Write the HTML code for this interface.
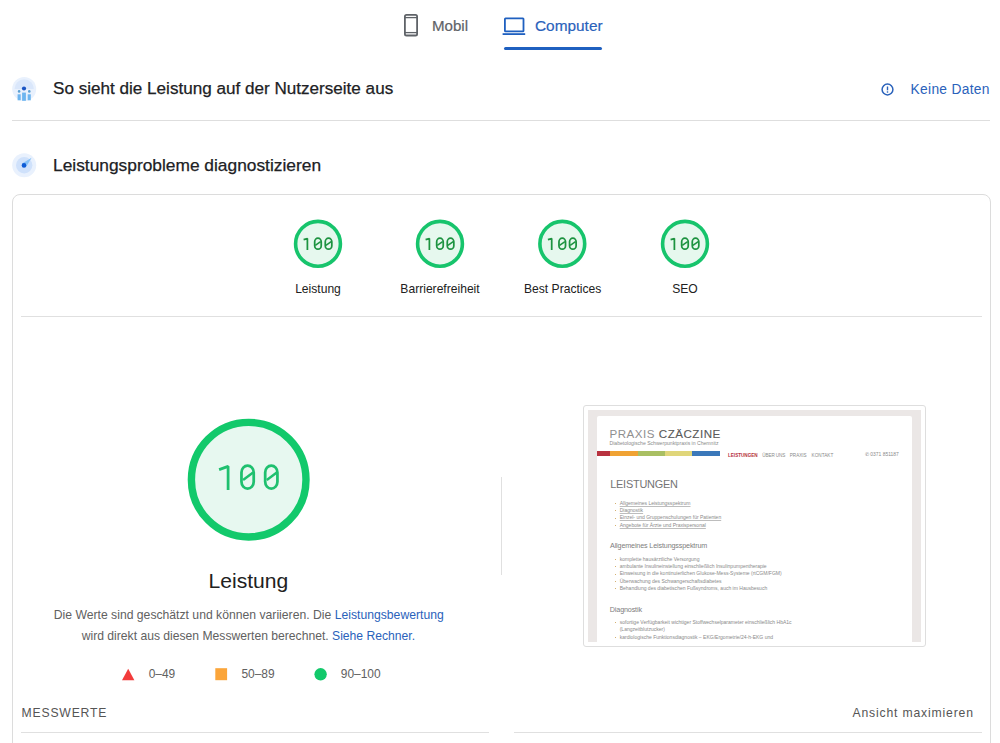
<!DOCTYPE html>
<html><head><meta charset="utf-8">
<style>
html,body{margin:0;padding:0;background:#fff;}
body{width:1000px;height:743px;overflow:hidden;position:relative;font-family:"Liberation Sans",sans-serif;}
.a{position:absolute;white-space:nowrap;}
.t{line-height:1;}
</style></head><body>
<svg class="a" style="left:0;top:0" width="1000" height="60" viewBox="0 0 1000 60">
  <rect x="404.9" y="14.9" width="12.2" height="20.6" rx="1.6" fill="none" stroke="#5f6368" stroke-width="1.8"/>
  <line x1="405" y1="17.6" x2="417" y2="17.6" stroke="#5f6368" stroke-width="1.3"/>
  <line x1="405" y1="32.6" x2="417" y2="32.6" stroke="#5f6368" stroke-width="1.3"/>
  <rect x="504.9" y="18.3" width="18.6" height="13" rx="0.6" fill="none" stroke="#1f60c0" stroke-width="1.8"/>
  <rect x="502.6" y="33.2" width="22.6" height="1.8" fill="#1f60c0"/>
  <rect x="504" y="47" width="98" height="3" rx="1.5" fill="#1f60c0"/>
</svg>
<div class="a t" style="left:432.00px;top:18.22px;font-size:15.1px;color:#5f6368;-webkit-text-stroke:0.22px #5f6368;">Mobil</div>
<div class="a t" style="left:535.00px;top:17.76px;font-size:15.4px;color:#2a62bb;-webkit-text-stroke:0.18px #2a62bb;">Computer</div>
<svg class="a" style="left:0;top:60px" width="60" height="130" viewBox="0 60 60 130">
  <circle cx="24.2" cy="89" r="12" fill="#e9f1fd"/>
  <path d="M14.5 89 A9.7 9.7 0 0 1 33.9 89 Z" fill="#dae7fb"/>
  <circle cx="24" cy="88.5" r="2.1" fill="#1b55c4"/>
  <circle cx="19.1" cy="91.4" r="1.3" fill="#5b9fd2"/>
  <circle cx="29.3" cy="91.4" r="1.3" fill="#5b9fd2"/>
  <rect x="17.6" y="94.3" width="3.1" height="6" fill="#6db5ef"/>
  <rect x="22.1" y="92.6" width="3.8" height="8.2" fill="#6db5ef"/>
  <rect x="27.7" y="94.3" width="3.1" height="6" fill="#6db5ef"/>
  <circle cx="24.2" cy="165.2" r="12" fill="#e9f1fd"/>
  <circle cx="24.2" cy="165.2" r="8.2" fill="#cfe1fb"/>
  <path d="M31.6 157.7 L22.1 163.5 L25.9 167.3 Z" fill="#86c1f6"/>
  <circle cx="24" cy="165.4" r="2.3" fill="#0d5bd6"/>
</svg>
<div class="a t" style="left:53.00px;top:79.92px;font-size:17.1px;color:#202124;-webkit-text-stroke:0.25px #202124;">So sieht die Leistung auf der Nutzerseite aus</div>
<div class="a t" style="left:53.00px;top:156.81px;font-size:17.35px;color:#202124;-webkit-text-stroke:0.25px #202124;">Leistungsprobleme diagnostizieren</div>
<svg class="a" style="left:878px;top:80px" width="20" height="20" viewBox="878 79.5 20 20">
  <circle cx="887.5" cy="89" r="5.4" fill="none" stroke="#2a62bb" stroke-width="1.5"/>
  <rect x="886.8" y="86" width="1.4" height="3.8" fill="#2a62bb"/>
  <rect x="886.8" y="90.8" width="1.4" height="1.4" fill="#2a62bb"/>
</svg>
<div class="a t" style="left:910.60px;top:83.32px;font-size:13.8px;color:#2a62bb;letter-spacing:0.29px;">Keine Daten</div>
<div class="a" style="left:12px;top:120px;width:978px;height:1px;background:#dedede;"></div>
<div class="a" style="left:12px;top:194px;width:977px;height:700px;border:1px solid #dcdcdc;border-radius:8px;"></div>
<svg class="a" style="left:0;top:0" width="1000" height="743" viewBox="0 0 1000 743">
<circle cx="318" cy="243.8" r="22.4" fill="#e6f8ee" stroke="#17c46c" stroke-width="3.6"/>
<path d="M303.60 239.70 L307.40 238.61 L307.40 250.10" fill="none" stroke="#1d9340" stroke-width="1.75" stroke-linejoin="bevel"/>
<rect x="314.68" y="238.18" width="6.55" height="11.05" rx="3.28" ry="3.60" fill="none" stroke="#1d9340" stroke-width="1.75"/>
<line x1="315.30" y1="245.30" x2="320.60" y2="241.70" stroke="#1d9340" stroke-width="1.57"/>
<rect x="325.27" y="238.18" width="6.55" height="11.05" rx="3.28" ry="3.60" fill="none" stroke="#1d9340" stroke-width="1.75"/>
<line x1="325.90" y1="245.30" x2="331.20" y2="241.70" stroke="#1d9340" stroke-width="1.57"/>
<circle cx="440" cy="243.8" r="22.4" fill="#e6f8ee" stroke="#17c46c" stroke-width="3.6"/>
<path d="M425.60 239.70 L429.40 238.61 L429.40 250.10" fill="none" stroke="#1d9340" stroke-width="1.75" stroke-linejoin="bevel"/>
<rect x="436.68" y="238.18" width="6.55" height="11.05" rx="3.28" ry="3.60" fill="none" stroke="#1d9340" stroke-width="1.75"/>
<line x1="437.30" y1="245.30" x2="442.60" y2="241.70" stroke="#1d9340" stroke-width="1.57"/>
<rect x="447.27" y="238.18" width="6.55" height="11.05" rx="3.28" ry="3.60" fill="none" stroke="#1d9340" stroke-width="1.75"/>
<line x1="447.90" y1="245.30" x2="453.20" y2="241.70" stroke="#1d9340" stroke-width="1.57"/>
<circle cx="562.3" cy="243.8" r="22.4" fill="#e6f8ee" stroke="#17c46c" stroke-width="3.6"/>
<path d="M547.90 239.70 L551.70 238.61 L551.70 250.10" fill="none" stroke="#1d9340" stroke-width="1.75" stroke-linejoin="bevel"/>
<rect x="558.97" y="238.18" width="6.55" height="11.05" rx="3.28" ry="3.60" fill="none" stroke="#1d9340" stroke-width="1.75"/>
<line x1="559.60" y1="245.30" x2="564.90" y2="241.70" stroke="#1d9340" stroke-width="1.57"/>
<rect x="569.57" y="238.18" width="6.55" height="11.05" rx="3.28" ry="3.60" fill="none" stroke="#1d9340" stroke-width="1.75"/>
<line x1="570.20" y1="245.30" x2="575.50" y2="241.70" stroke="#1d9340" stroke-width="1.57"/>
<circle cx="685" cy="243.8" r="22.4" fill="#e6f8ee" stroke="#17c46c" stroke-width="3.6"/>
<path d="M670.60 239.70 L674.40 238.61 L674.40 250.10" fill="none" stroke="#1d9340" stroke-width="1.75" stroke-linejoin="bevel"/>
<rect x="681.67" y="238.18" width="6.55" height="11.05" rx="3.28" ry="3.60" fill="none" stroke="#1d9340" stroke-width="1.75"/>
<line x1="682.30" y1="245.30" x2="687.60" y2="241.70" stroke="#1d9340" stroke-width="1.57"/>
<rect x="692.27" y="238.18" width="6.55" height="11.05" rx="3.28" ry="3.60" fill="none" stroke="#1d9340" stroke-width="1.75"/>
<line x1="692.90" y1="245.30" x2="698.20" y2="241.70" stroke="#1d9340" stroke-width="1.57"/>
<circle cx="248.7" cy="479.7" r="57.3" fill="#e7f8f0" stroke="#12c96b" stroke-width="7.4"/>
<path d="M219.10 469.60 L228.10 466.36 L228.10 489.90" fill="none" stroke="#1fc06f" stroke-width="2.75" stroke-linejoin="bevel"/>
<rect x="241.47" y="465.68" width="12.25" height="22.85" rx="6.12" ry="6.74" fill="none" stroke="#1fc06f" stroke-width="2.75"/>
<line x1="243.10" y1="479.90" x2="253.10" y2="472.50" stroke="#1fc06f" stroke-width="2.48"/>
<rect x="265.18" y="465.68" width="12.25" height="22.85" rx="6.12" ry="6.74" fill="none" stroke="#1fc06f" stroke-width="2.75"/>
<line x1="266.80" y1="479.90" x2="276.80" y2="472.50" stroke="#1fc06f" stroke-width="2.48"/>
</svg>
<div class="a t" style="left:218.00px;width:200px;text-align:center;top:282.76px;font-size:12.1px;color:#212121;">Leistung</div>
<div class="a t" style="left:340.00px;width:200px;text-align:center;top:282.76px;font-size:12.1px;color:#212121;">Barrierefreiheit</div>
<div class="a t" style="left:462.70px;width:200px;text-align:center;top:282.76px;font-size:12.1px;color:#212121;">Best Practices</div>
<div class="a t" style="left:585.00px;width:200px;text-align:center;top:282.76px;font-size:12.1px;color:#212121;">SEO</div>
<div class="a" style="left:21px;top:316px;width:961px;height:1px;background:#e0e0e0;"></div>
<div class="a t" style="left:98.40px;width:300px;text-align:center;top:570.14px;font-size:21.1px;color:#212121;">Leistung</div>
<div class="a t" style="left:8.75px;width:480px;text-align:center;top:609.47px;font-size:12.2px;color:#616161;">Die Werte sind geschätzt und können variieren. Die <span style="color:#2a62bb">Leistungsbewertung</span></div>
<div class="a t" style="left:8.40px;width:480px;text-align:center;top:629.72px;font-size:12.15px;color:#616161;">wird direkt aus diesen Messwerten berechnet. <span style="color:#2a62bb">Siehe Rechner.</span></div>
<svg class="a" style="left:110px;top:660px" width="240" height="30" viewBox="110 660 240 30"><path d="M128.2 668.8 L134.4 680.2 L122 680.2 Z" fill="#f23b3b"/><rect x="215.3" y="668.2" width="11.8" height="12" fill="#fba53a"/><circle cx="320.6" cy="674.3" r="6.2" fill="#12c96b"/></svg>
<div class="a t" style="left:148.70px;top:669.28px;font-size:11.95px;color:#616161;">0–49</div>
<div class="a t" style="left:241.40px;top:669.28px;font-size:11.95px;color:#616161;">50–89</div>
<div class="a t" style="left:340.80px;top:669.28px;font-size:11.95px;color:#616161;">90–100</div>
<div class="a" style="left:501px;top:477px;width:1px;height:98px;background:#e0e0e0;"></div>
<div class="a" style="left:583px;top:405px;width:341px;height:240px;border:1px solid #dedede;border-radius:3px;background:#fff;"></div>
<div class="a" style="left:588px;top:410px;width:333px;height:232px;background:#ebe7e6;"></div>
<div class="a" style="left:597px;top:416px;width:315px;height:226px;background:#ffffff;border-radius:2px 2px 0 0;"></div>
<div class="a t" style="left:609.50px;top:428.38px;font-size:11.6px;color:#888;letter-spacing:0.5px;"><span style="color:#8f8f8f">PRAXIS</span> <span style="color:#5a5a5a;-webkit-text-stroke:0.12px #5a5a5a">CZÄCZINE</span></div>
<div class="a t" style="left:609.50px;top:441.28px;font-size:5.1px;color:#8a8a8a;">Diabetologische Schwerpunktpraxis in Chemnitz</div>
<div class="a" style="left:597px;top:451px;width:13px;height:5px;background:#b8323f;"></div>
<div class="a" style="left:610px;top:451px;width:27.5px;height:5px;background:#f0a233;"></div>
<div class="a" style="left:637.5px;top:451px;width:27.5px;height:5px;background:#a9bf63;"></div>
<div class="a" style="left:665px;top:451px;width:27px;height:5px;background:#e0d67a;"></div>
<div class="a" style="left:692px;top:451px;width:28px;height:5px;background:#3b78ba;"></div>
<div class="a t" style="left:728.00px;top:453.71px;font-size:4.6px;color:#b5323e;"><b>LEISTUNGEN</b></div>
<div class="a t" style="left:762.30px;top:453.71px;font-size:4.6px;color:#8a8a8a;letter-spacing:-0.12px;">ÜBER UNS</div>
<div class="a t" style="left:789.80px;top:453.71px;font-size:4.6px;color:#8a8a8a;">PRAXIS</div>
<div class="a t" style="left:811.50px;top:453.62px;font-size:4.7px;color:#8a8a8a;">KONTAKT</div>
<div class="a t" style="left:865.00px;top:453.41px;font-size:4.95px;color:#8a8a8a;">✆ 0371 851187</div>
<div class="a t" style="left:610.20px;top:479.37px;font-size:10.9px;color:#747474;letter-spacing:-0.2px;">LEISTUNGEN</div>
<div class="a" style="left:614.9px;top:503.1px;width:1.2000000000000455px;height:1.1999999999999886px;background:#d4b070;"></div>
<div class="a t" style="left:619.70px;top:501.04px;font-size:5.03px;color:#8a8a8a;text-decoration:underline;text-decoration-color:#bdbdbd;text-decoration-thickness:0.6px;">Allgemeines Leistungsspektrum</div>
<div class="a" style="left:614.9px;top:510.0px;width:1.2000000000000455px;height:1.1999999999999886px;background:#d4b070;"></div>
<div class="a t" style="left:619.70px;top:507.94px;font-size:5.03px;color:#8a8a8a;text-decoration:underline;text-decoration-color:#bdbdbd;text-decoration-thickness:0.6px;">Diagnostik</div>
<div class="a" style="left:614.9px;top:517.5px;width:1.2000000000000455px;height:1.2000000000000455px;background:#d4b070;"></div>
<div class="a t" style="left:619.70px;top:515.44px;font-size:5.03px;color:#8a8a8a;text-decoration:underline;text-decoration-color:#bdbdbd;text-decoration-thickness:0.6px;">Einzel- und Gruppenschulungen für Patienten</div>
<div class="a" style="left:614.9px;top:525.0px;width:1.2000000000000455px;height:1.2000000000000455px;background:#d4b070;"></div>
<div class="a t" style="left:619.70px;top:522.94px;font-size:5.03px;color:#8a8a8a;text-decoration:underline;text-decoration-color:#bdbdbd;text-decoration-thickness:0.6px;">Angebote für Ärzte und Praxispersonal</div>
<div class="a t" style="left:610.00px;top:542.01px;font-size:7.2px;color:#7d7d7d;letter-spacing:-0.15px;">Allgemeines Leistungsspektrum</div>
<div class="a" style="left:614.9px;top:558.6px;width:1.2000000000000455px;height:1.2000000000000455px;background:#d4b070;"></div>
<div class="a t" style="left:619.70px;top:556.54px;font-size:5.03px;color:#8a8a8a;">komplette hausärztliche Versorgung</div>
<div class="a" style="left:614.9px;top:566.2px;width:1.2000000000000455px;height:1.2000000000000455px;background:#d4b070;"></div>
<div class="a t" style="left:619.70px;top:564.14px;font-size:5.03px;color:#8a8a8a;">ambulante Insulineinstellung einschließlich Insulinpumpentherapie</div>
<div class="a" style="left:614.9px;top:573.5px;width:1.2000000000000455px;height:1.2000000000000455px;background:#d4b070;"></div>
<div class="a t" style="left:619.70px;top:571.44px;font-size:5.03px;color:#8a8a8a;">Einweisung in die kontinuierlichen Glukose-Mess-Systeme (rtCGM/FGM)</div>
<div class="a" style="left:614.9px;top:580.7px;width:1.2000000000000455px;height:1.2000000000000455px;background:#d4b070;"></div>
<div class="a t" style="left:619.70px;top:578.64px;font-size:5.03px;color:#8a8a8a;">Überwachung des Schwangerschaftsdiabetes</div>
<div class="a" style="left:614.9px;top:587.9px;width:1.2000000000000455px;height:1.2000000000000455px;background:#d4b070;"></div>
<div class="a t" style="left:619.70px;top:585.84px;font-size:5.03px;color:#8a8a8a;">Behandlung des diabetischen Fußsyndroms, auch im Hausbesuch</div>
<div class="a t" style="left:609.80px;top:605.51px;font-size:7.2px;color:#7d7d7d;letter-spacing:-0.15px;">Diagnostik</div>
<div class="a" style="left:614.9px;top:622.2px;width:1.2000000000000455px;height:1.2000000000000455px;background:#d4b070;"></div>
<div class="a t" style="left:619.70px;top:620.14px;font-size:5.03px;color:#8a8a8a;">sofortige Verfügbarkeit wichtiger Stoffwechselparameter einschließlich HbA1c</div>
<div class="a t" style="left:619.70px;top:627.24px;font-size:5.03px;color:#8a8a8a;">(Langzeitblutzucker)</div>
<div class="a" style="left:614.9px;top:636.9px;width:1.2000000000000455px;height:1.2000000000000455px;background:#d4b070;"></div>
<div class="a t" style="left:619.70px;top:634.84px;font-size:5.03px;color:#8a8a8a;">kardiologische Funktionsdiagnostik – EKG/Ergometrie/24-h-EKG und</div>
<div class="a t" style="left:21.60px;top:707.07px;font-size:12.2px;color:#555555;letter-spacing:0.8px;">MESSWERTE</div>
<div class="a t" style="left:673.80px;width:300px;text-align:right;top:707.07px;font-size:12.2px;color:#555555;letter-spacing:0.83px;">Ansicht maximieren</div>
<div class="a" style="left:21px;top:732px;width:468px;height:1px;background:#e0e0e0;"></div>
<div class="a" style="left:514px;top:732px;width:468px;height:1px;background:#e0e0e0;"></div>
</body></html>
